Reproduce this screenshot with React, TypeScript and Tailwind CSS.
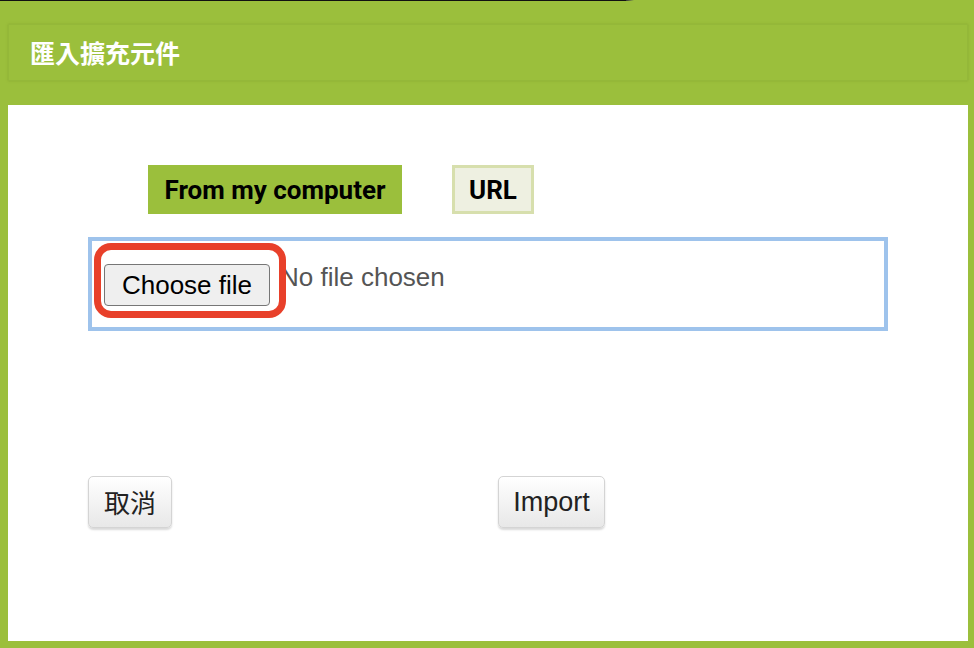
import React from "react";

const GREEN = "bg-[#9bbf3c]";

export default function App() {
  return (
    <div className={`w-[974px] h-[648px] ${GREEN} flex flex-col overflow-hidden`}>
      {/* window edge line */}
      <div className="h-px flex">
        <div className="w-[626px] bg-[#111]" />
        <div className="w-[8px] bg-gradient-to-r from-[#333] to-[#9bbf3c]" />
      </div>

      {/* title bar */}
      <div className="mt-[23px] ml-[8px] mr-[6px] h-[57px] border border-[#94b839] bg-[#9bbf3c] shadow-[0_0_2px_rgba(120,150,40,0.5)] flex items-center pl-[21px]">
        <h1 className="text-white font-bold text-[25px] leading-none font-['Noto_Sans_CJK_TC','Noto_Sans_CJK_SC',sans-serif]">
          匯入擴充元件
        </h1>
      </div>

      {/* content */}
      <div className="mt-[24px] ml-[8px] mr-[6px] h-[536px] bg-white flex flex-col pl-[80px]">
        <div className="mt-[60px] ml-[60px] flex items-center gap-[50px] font-['Roboto',sans-serif] font-bold text-[26px] text-black">
          <div className="w-[254px] h-[49px] bg-[#9bbf3c] flex items-center justify-center leading-none">
            From my computer
          </div>
          <div className="w-[82px] h-[49px] bg-[#eef0e1] border-[3px] border-[#d7dfad] flex items-center justify-center leading-none">
            URL
          </div>
        </div>

        <div className="mt-[23px] w-[800px] h-[94px] border-4 border-[#9ec3ec] flex items-start pl-[12px] pt-[23px] font-['Liberation_Sans',Arial,sans-serif]">
          <div className="relative">
            <button className="w-[166px] h-[42px] bg-[#efefef] border border-[#767676] rounded-[4px] text-[26px] text-black leading-none">
              Choose file
            </button>
            <div className="absolute -left-[10px] -top-[21px] w-[192px] h-[75px] border-[7px] border-[#e8402a] rounded-[17px] pointer-events-none" />
          </div>
          <span className="ml-[10px] -mt-[2px] text-[26px] text-[#555] leading-none pt-[2px]">No file chosen</span>
        </div>

        <div className="mt-[145px] flex items-start">
          <button className="w-[84px] h-[52px] rounded-[5px] border border-[#d4d4d4] bg-gradient-to-b from-white to-[#e8e8e8] shadow-[0_2px_2px_rgba(0,0,0,0.15)] text-[26px] text-[#222] leading-none font-['Noto_Sans_CJK_TC',sans-serif]">
            取消
          </button>
          <button className="ml-[326px] w-[107px] h-[52px] rounded-[5px] border border-[#d4d4d4] bg-gradient-to-b from-white to-[#e8e8e8] shadow-[0_2px_2px_rgba(0,0,0,0.15)] text-[27px] text-[#222] leading-none font-['Liberation_Sans',Arial,sans-serif]">
            Import
          </button>
        </div>
      </div>
    </div>
  );
}
